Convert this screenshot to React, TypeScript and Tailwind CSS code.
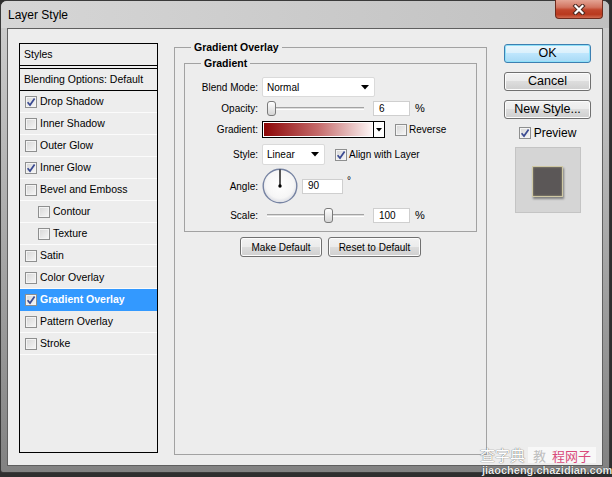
import React from "react";

// One row in the style list on the left.
type Item = { name: string; checked?: boolean; indent?: boolean; active?: boolean };

const items: Item[] = [
  { name: "Drop Shadow", checked: true },
  { name: "Inner Shadow" },
  { name: "Outer Glow" },
  { name: "Inner Glow", checked: true },
  { name: "Bevel and Emboss" },
  { name: "Contour", indent: true },
  { name: "Texture", indent: true },
  { name: "Satin" },
  { name: "Color Overlay" },
  { name: "Gradient Overlay", checked: true, active: true },
  { name: "Pattern Overlay" },
  { name: "Stroke" },
];

function Check({ on }: { on?: boolean }) {
  return (
    <span className="flex h-[12px] w-[12px] shrink-0 items-center justify-center border border-[#8e8f8f] bg-gradient-to-br from-[#d6d6d6] to-[#f7f7f7] shadow-[inset_0_0_0_1px_#f4f4f4]">
      {on && (
        <svg width="10" height="10" viewBox="0 0 10 10">
          <path d="M1.6 5.2 L4 8 L8.6 1.4" fill="none" stroke="#3a4a92" strokeWidth="1.7" />
        </svg>
      )}
    </span>
  );
}

function Arrow() {
  return (
    <svg width="8" height="5" viewBox="0 0 8 5" className="shrink-0">
      <polygon points="0,0 8,0 4,4.5" fill="#000" />
    </svg>
  );
}

function Select({ w, value }: { w: string; value: string }) {
  return (
    <div className={"flex h-full items-center justify-between rounded-[2px] border border-[#dadada] bg-white pl-[4px] pr-[5px] " + w}>
      <span>{value}</span>
      <Arrow />
    </div>
  );
}

function Field({ w, value }: { w: string; value: string }) {
  return (
    <div className={"flex h-[15px] items-center border border-[#cfcfcf] bg-white pl-[5px] leading-none " + w}>
      {value}
    </div>
  );
}

// 細いスライダー。pos は溝の左端からのつまみ位置(px)
function Slider({ pos }: { pos: number }) {
  return (
    <div className="relative ml-[5px] mr-[9px] flex h-full flex-1 items-center">
      <div className="h-[3px] w-full border-t border-[#a3a3a3] border-b border-b-white bg-[#dcdcdc]" />
      <div
        className="absolute top-[0px] h-[15px] w-[9px] rounded-[3px] border border-[#7a7a7a] bg-gradient-to-b from-white to-[#d5d5d5]"
        style={{ left: pos }}
      />
    </div>
  );
}

function Label({ children }: { children: React.ReactNode }) {
  return <span className="w-[73px] shrink-0 text-right">{children}</span>;
}

function WinButton({ children, primary }: { children: React.ReactNode; primary?: boolean }) {
  return (
    <div
      className={
        "flex h-[19px] w-[87px] items-center justify-center rounded-[3px] border text-[12.5px] leading-none " +
        (primary
          ? "border-[#3c7fb1] bg-[linear-gradient(#eaf6fd,#d9f0fc_50%,#bee6fd_50%,#a7d9f5)] shadow-[inset_0_0_0_1px_#8fe0f8]"
          : "border-[#707070] bg-[linear-gradient(#f2f2f2,#ebebeb_50%,#dddddd_50%,#cfcfcf)] shadow-[inset_0_0_0_1px_#fcfcfc]")
      }
    >
      {children}
    </div>
  );
}

function SmallButton({ w, children }: { w: string; children: React.ReactNode }) {
  return (
    <div
      className={
        "flex h-[20px] items-center justify-center rounded-[3px] border border-[#707070] bg-[linear-gradient(#f2f2f2,#ebebeb_50%,#dddddd_50%,#cfcfcf)] shadow-[inset_0_0_0_1px_#fcfcfc] " +
        w
      }
    >
      {children}
    </div>
  );
}

export default function App() {
  return (
    <div className="relative h-[477px] w-[612px] overflow-hidden bg-[#2f2f2f] font-['Liberation_Sans',Arial,sans-serif] text-black">
      {/* ウィンドウ枠 */}
      <div className="flex h-[473px] w-[610px] flex-col rounded-t-[7px] rounded-b-[3px] border border-[#3a3a3a] bg-gradient-to-b from-[#d0d0d0] via-[#a9a9a9] to-[#828282]">
        {/* タイトルバー */}
        <div className="flex h-[27px] shrink-0 items-center rounded-t-[6px] bg-gradient-to-r from-[#d6d6d6] to-[#c0c0c0] pl-[7px] text-[12px]">
          Layer Style
        </div>

        {/* 本体 */}
        <div className="mx-[6px] flex h-[438px] shrink-0 items-start border border-[#5f5f5f] bg-[#ededed] text-[10px]">
          {/* 左のスタイル一覧 */}
          <div className="ml-[11px] mt-[14px] flex h-[410px] w-[139px] shrink-0 flex-col border border-black text-[10.5px]">
            <div className="flex h-[22px] items-center border-b border-black pl-[4px]">Styles</div>
            <div className="h-[2px]" />
            <div className="flex h-[23px] items-center border-y border-black pl-[4px]">Blending Options: Default</div>
            {items.map((it) => (
              <div
                key={it.name}
                className={
                  "flex h-[22px] items-center gap-[3px] border-b " +
                  (it.indent ? "pl-[18px] " : "pl-[5px] ") +
                  (it.active ? "border-[#3399ff] bg-[#3399ff] font-bold text-white" : "border-[#fbfbfb]")
                }
              >
                <Check on={it.checked} />
                <span>{it.name}</span>
              </div>
            ))}
          </div>

          {/* Gradient Overlay のグループ */}
          <div className="relative ml-[16px] mt-[18px] h-[408px] w-[313px] shrink-0 border border-[#a2a2a2]">
            <span className="absolute -top-[8px] left-[16px] bg-[#ededed] px-[3px] text-[10.5px] font-bold leading-[14px]">
              Gradient Overlay
            </span>

            <div className="relative ml-[9px] mt-[15px] flex h-[169px] w-[293px] flex-col border border-[#a2a2a2] pt-[13px]">
              <span className="absolute -top-[8px] left-[16px] bg-[#ededed] px-[3px] text-[10.5px] font-bold leading-[14px]">
                Gradient
              </span>

              {/* Blend Mode */}
              <div className="flex h-[20px] items-center">
                <Label>Blend Mode:</Label>
                <div className="ml-[4px] h-full">
                  <Select w="w-[113px]" value="Normal" />
                </div>
              </div>

              {/* Opacity */}
              <div className="mt-[4px] flex h-[15px] items-center">
                <Label>Opacity:</Label>
                <div className="ml-[4px] flex h-full w-[111px]">
                  <Slider pos={0} />
                </div>
                <Field w="w-[37px]" value="6" />
                <span className="ml-[5px] text-[11px]">%</span>
              </div>

              {/* Gradient */}
              <div className="mt-[5px] flex h-[17px] items-center">
                <Label>Gradient:</Label>
                <div className="ml-[4px] flex h-full w-[123px] border border-black bg-white">
                  <div className="m-[1px] flex-1 bg-[linear-gradient(to_right,#8c0606,#c56a6a_50%,#fdf6f6)]" />
                  <div className="flex w-[11px] items-center justify-center border-l border-black">
                    <svg width="6" height="4" viewBox="0 0 6 4">
                      <polygon points="0,0 6,0 3,3.5" fill="#000" />
                    </svg>
                  </div>
                </div>
                <div className="ml-[10px] flex items-center gap-[2px]">
                  <Check />
                  <span>Reverse</span>
                </div>
              </div>

              {/* Style */}
              <div className="mt-[6px] flex h-[21px] items-center">
                <Label>Style:</Label>
                <div className="ml-[4px] h-full">
                  <Select w="w-[63px]" value="Linear" />
                </div>
                <div className="ml-[10px] flex items-center gap-[2px]">
                  <Check on />
                  <span>Align with Layer</span>
                </div>
              </div>

              {/* Angle */}
              <div className="mt-[3px] flex h-[36px] items-center">
                <Label>Angle:</Label>
                <svg width="36" height="36" viewBox="0 0 36 36" className="ml-[4px] shrink-0">
                  <defs>
                    <radialGradient id="dial" cx="50%" cy="45%" r="55%">
                      <stop offset="0%" stopColor="#ffffff" />
                      <stop offset="75%" stopColor="#f6f6f6" />
                      <stop offset="100%" stopColor="#d9dbe2" />
                    </radialGradient>
                  </defs>
                  <circle cx="18" cy="18" r="16.8" fill="url(#dial)" stroke="#7683a2" strokeWidth="1.4" />
                  <line x1="18" y1="18" x2="18" y2="1.5" stroke="#000" strokeWidth="1.3" />
                  <circle cx="18" cy="18" r="1.7" fill="#000" />
                </svg>
                <div className="ml-[4px]">
                  <Field w="w-[41px]" value="90" />
                </div>
                <span className="mb-[10px] ml-[4px] self-center text-[10px] leading-none">°</span>
              </div>

              {/* Scale */}
              <div className="mt-[4px] flex h-[15px] items-center">
                <Label>Scale:</Label>
                <div className="ml-[4px] flex h-full w-[111px]">
                  <Slider pos={57} />
                </div>
                <Field w="w-[37px]" value="100" />
                <span className="ml-[5px] text-[11px]">%</span>
              </div>
            </div>

            <div className="ml-[65px] mt-[5px] flex gap-[6px]">
              <SmallButton w="w-[82px]">Make Default</SmallButton>
              <SmallButton w="w-[93px]">Reset to Default</SmallButton>
            </div>
          </div>

          {/* 右のボタン列 */}
          <div className="ml-[17px] mt-[15px] flex w-[87px] shrink-0 flex-col items-center">
            <WinButton primary>OK</WinButton>
            <div className="mt-[9px]">
              <WinButton>Cancel</WinButton>
            </div>
            <div className="mt-[9px]">
              <WinButton>New Style...</WinButton>
            </div>
            <div className="mt-[7px] flex h-[13px] items-center gap-[3px] text-[12px]">
              <Check on />
              <span>Preview</span>
            </div>
            <div className="mt-[8px] flex h-[66px] w-[66px] items-start justify-center border border-[#c4c4c4] bg-[#d5d5d5] pt-[18px]">
              <div className="h-[31px] w-[31px] border border-[#cfc8a4] bg-[#5b5757] shadow-[1px_2px_2px_rgba(0,0,0,0.4),inset_0_0_2px_#a9a283]" />
            </div>
          </div>
        </div>
      </div>

      {/* 閉じるボタン */}
      <div className="absolute left-[555px] top-0 flex h-[19px] w-[48px] items-center justify-center rounded-b-[4px] border border-t-0 border-[#6e2a1c] bg-[linear-gradient(#e4a494,#d27460_40%,#c0442a_55%,#b9391e_80%,#cf6a50)]">
        <svg width="14" height="11" viewBox="0 0 14 11">
          <path d="M3.5 2 L10.5 9 M10.5 2 L3.5 9" stroke="#4b2a22" strokeWidth="4.2" strokeLinecap="square" />
          <path d="M3.5 2 L10.5 9 M10.5 2 L3.5 9" stroke="#ffffff" strokeWidth="2.2" strokeLinecap="square" />
        </svg>
      </div>

      {/* 透かし */}
      <div className="absolute left-[480px] top-[447px] flex items-center font-['Noto_Sans_CJK_SC',sans-serif]">
        <span className="text-[15px] leading-[16px] text-white [text-shadow:0_0_1px_#777,0_0_1px_#777]">查字典</span>
        <span className="ml-[3px] flex h-[16px] w-[68px] items-center justify-between bg-white/60 px-[5px] text-[13px] leading-none">
          <span className="text-[#bdbdbd]">教</span>
          <span className="text-[#d94a7a]">程网子</span>
        </span>
      </div>
      <div className="absolute left-[482px] top-[464px] text-[11px] font-bold leading-[12px] text-[#e8e8e8] [text-shadow:0_0_1px_#000]">
        jiaocheng.chazidian.com
      </div>
    </div>
  );
}
